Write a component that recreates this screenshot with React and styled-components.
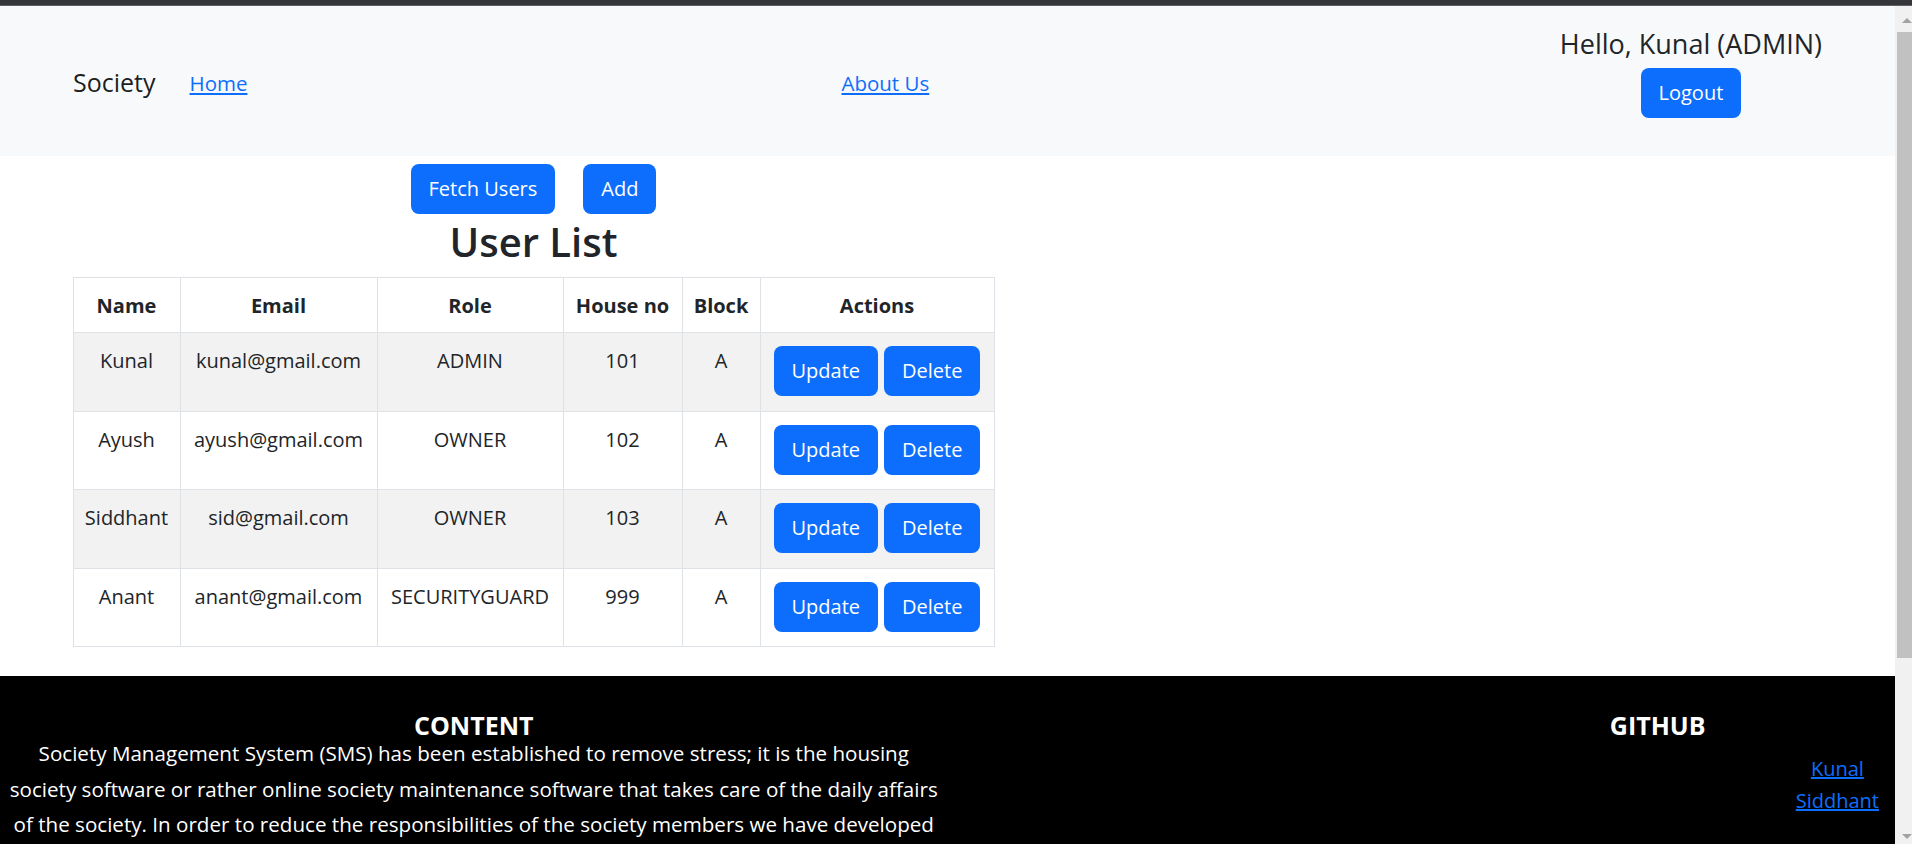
import React from 'react';
import styled, { createGlobalStyle } from 'styled-components';

const GlobalStyle = createGlobalStyle`
  html, body {
    margin: 0;
    height: 100%;
    overflow: hidden;
  }

  body {
    font-family: "Open Sans", "Noto Sans", sans-serif;
    font-size: 20px;
    line-height: 1.5;
    color: #212529;
    background: #fff;
  }

  * {
    box-sizing: border-box;
  }
`;

const TopStrip = styled.div`
  height: 6px;
  background: #35363a;
  border-bottom: 1px solid #5f6062;
`;

const Shell = styled.div`
  display: flex;
  height: calc(100vh - 6px);
`;

const Viewport = styled.div`
  flex: 1;
  min-width: 0;
  overflow: hidden;
`;

const Navbar = styled.nav`
  height: 150px;
  padding: 4px 73px 0;
  background: #f8f9fa;
  display: flex;
  align-items: center;
`;

const Brand = styled.span`
  font-size: 25px;
  line-height: 1.5;
  color: rgba(0, 0, 0, 0.9);
  margin-right: 34px;
`;

const NavList = styled.div`
  display: flex;
  align-items: center;
  gap: 594px;
`;

const NavLink = styled.a`
  color: #0d6efd;
  text-decoration: underline;
  font-size: 20.5px;
  line-height: 30px;
  cursor: pointer;
`;

const UserBox = styled.div`
  margin-left: auto;
  align-self: flex-start;
  margin-top: 18px;
  display: flex;
  flex-direction: column;
  align-items: center;
`;

const Greeting = styled.div`
  font-size: 27px;
  font-weight: 500;
  line-height: 31px;
  margin-bottom: 9px;
`;

const Button = styled.button`
  height: 50px;
  padding: 0 18px;
  border: none;
  border-radius: 8px;
  background: #0d6efd;
  color: #fff;
  font-family: inherit;
  font-size: 20px;
  line-height: 30px;
  cursor: pointer;
`;

const Main = styled.main`
  padding: 8px 0 29px 73px;
`;

const Panel = styled.section`
  width: 921px;
  display: flex;
  flex-direction: column;
  align-items: center;
`;

const ActionBar = styled.div`
  display: flex;
  gap: 28px;
  margin-bottom: 4px;
`;

const Title = styled.h2`
  margin: 0 0 11px;
  font-size: 40px;
  font-weight: 600;
  line-height: 48px;
`;

const Table = styled.table`
  width: 100%;
  table-layout: fixed;
  border-collapse: collapse;
  border: 1px solid #dee2e6;
`;

const Th = styled.th`
  padding: 13px 4px 11px;
  border: 1px solid #dee2e6;
  font-weight: 700;
  text-align: center;
  vertical-align: top;
  white-space: nowrap;
`;

const Row = styled.tr`
  background: ${(p) => (p.$striped ? '#f2f2f2' : '#fff')};
`;

const Td = styled.td`
  padding: 13px 4px 14.6px;
  border: 1px solid #dee2e6;
  text-align: center;
  vertical-align: top;
  white-space: nowrap;
`;

const RowActions = styled.div`
  display: flex;
  justify-content: center;
  gap: 6px;
`;

const Footer = styled.footer`
  background: #000;
  color: #fff;
  padding-top: 38px;
  display: grid;
  grid-template-columns: 2fr 1fr 1fr;
`;

const FooterCol = styled.div`
  padding: 0 ${(p) => (p.$wide ? '8px' : '16px')} 0 ${(p) => (p.$wide ? '8px' : '15px')};
  display: flex;
  flex-direction: column;
  align-items: center;
`;

const FooterHeading = styled.h5`
  margin: 0;
  font-size: 25px;
  font-weight: 700;
  line-height: 22px;
`;

const FooterText = styled.p`
  margin: 0;
  font-size: 20.6px;
  line-height: 35.5px;
  text-align: center;
`;

const LinkList = styled.div`
  align-self: flex-end;
  margin-top: 17px;
  display: flex;
  flex-direction: column;
  align-items: center;
`;

const FooterLink = styled.a`
  color: #0d6efd;
  text-decoration: underline;
  font-size: 20px;
  line-height: 32px;
`;

const ScrollTrack = styled.div`
  width: 17px;
  flex: none;
  background: #f1f1f1;
  display: flex;
  flex-direction: column;
  align-items: flex-start;
`;

const ScrollArrow = styled.div`
  width: 0;
  height: 0;
  margin-left: 7px;
  border-left: 5px solid transparent;
  border-right: 5px solid transparent;
  ${(p) =>
    p.$down
      ? 'border-top: 5px solid #a3a3a3; margin-top: auto; margin-bottom: 5px;'
      : 'border-bottom: 5px solid #a3a3a3; margin-top: 12px;'}
`;

const ScrollThumb = styled.div`
  width: 15px;
  height: 626px;
  margin: 9px 0 0 2px;
  background: #c1c1c1;
`;

const users = [
  { name: 'Kunal', email: 'kunal@gmail.com', role: 'ADMIN', house: 101, block: 'A' },
  { name: 'Ayush', email: 'ayush@gmail.com', role: 'OWNER', house: 102, block: 'A' },
  { name: 'Siddhant', email: 'sid@gmail.com', role: 'OWNER', house: 103, block: 'A' },
  { name: 'Anant', email: 'anant@gmail.com', role: 'SECURITYGUARD', house: 999, block: 'A' },
];

const columns = [
  { label: 'Name', width: 107 },
  { label: 'Email', width: 197 },
  { label: 'Role', width: 186 },
  { label: 'House no', width: 119 },
  { label: 'Block', width: 78 },
  { label: 'Actions', width: 234 },
];

export default function App() {
  return (
    <>
      <GlobalStyle />
      <TopStrip />
      <Shell>
        <Viewport>
          <Navbar>
            <Brand>Society</Brand>
            <NavList>
              <NavLink>Home</NavLink>
              <NavLink>About Us</NavLink>
            </NavList>
            <UserBox>
              <Greeting>Hello, Kunal (ADMIN)</Greeting>
              <Button>Logout</Button>
            </UserBox>
          </Navbar>

          <Main>
            <Panel>
              <ActionBar>
                <Button>Fetch Users</Button>
                <Button>Add</Button>
              </ActionBar>
              <Title>User List</Title>
              <Table>
                <colgroup>
                  {columns.map((c) => (
                    <col key={c.label} style={{ width: c.width }} />
                  ))}
                </colgroup>
                <thead>
                  <tr>
                    {columns.map((c) => (
                      <Th key={c.label}>{c.label}</Th>
                    ))}
                  </tr>
                </thead>
                <tbody>
                  {users.map((u, i) => (
                    <Row key={u.email} $striped={i % 2 === 0}>
                      <Td>{u.name}</Td>
                      <Td>{u.email}</Td>
                      <Td>{u.role}</Td>
                      <Td>{u.house}</Td>
                      <Td>{u.block}</Td>
                      <Td>
                        <RowActions>
                          <Button>Update</Button>
                          <Button>Delete</Button>
                        </RowActions>
                      </Td>
                    </Row>
                  ))}
                </tbody>
              </Table>
            </Panel>
          </Main>

          <Footer>
            <FooterCol $wide>
              <FooterHeading>CONTENT</FooterHeading>
              <FooterText>
                Society Management System (SMS) has been established to remove stress; it is the housing
                society software or rather online society maintenance software that takes care of the daily
                affairs of the society. In order to reduce the responsibilities of the society members we have
                developed this system to manage residents, houses and security staff in one place.
              </FooterText>
            </FooterCol>
            <FooterCol />
            <FooterCol>
              <FooterHeading>GITHUB</FooterHeading>
              <LinkList>
                <FooterLink>Kunal</FooterLink>
                <FooterLink>Siddhant</FooterLink>
              </LinkList>
            </FooterCol>
          </Footer>
        </Viewport>
        <ScrollTrack>
          <ScrollArrow />
          <ScrollThumb />
          <ScrollArrow $down />
        </ScrollTrack>
      </Shell>
    </>
  );
}
